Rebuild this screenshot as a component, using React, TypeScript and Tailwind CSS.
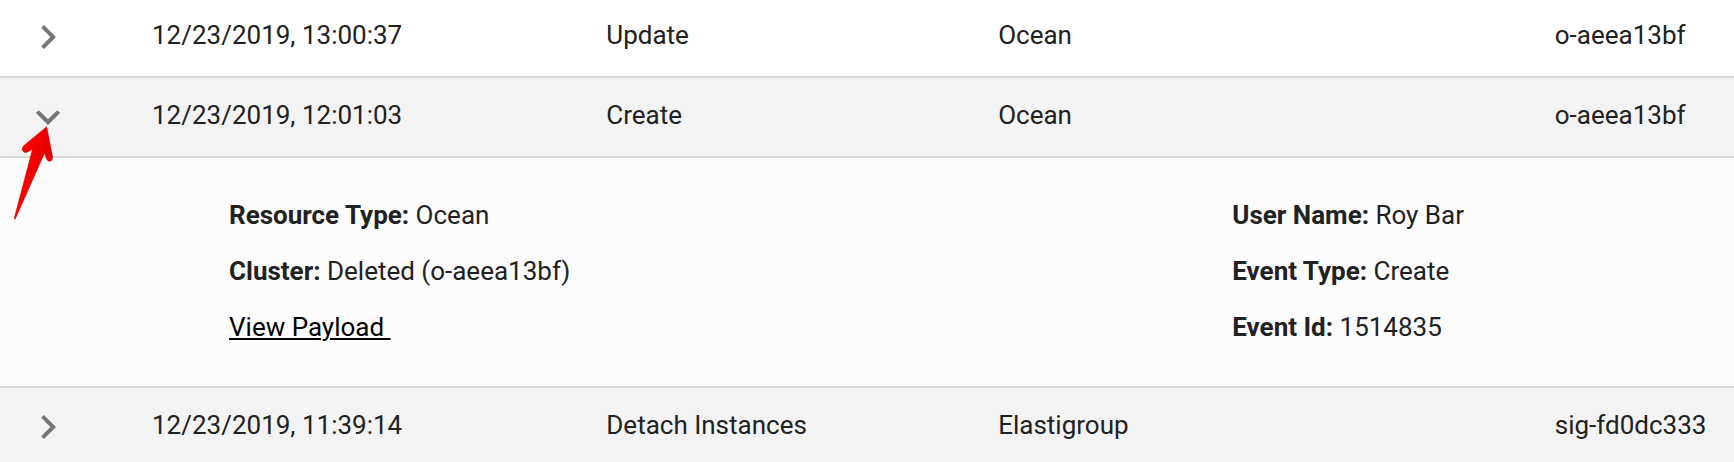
import { Fragment, useState } from "react";

type Detail = { label: string; value: string };

type AuditEvent = {
  id: string;
  time: string;
  action: string;
  product: string;
  resource: string;
  left?: Detail[];
  right?: Detail[];
};

const EVENTS: AuditEvent[] = [
  { id: "1", time: "12/23/2019, 13:00:37", action: "Update", product: "Ocean", resource: "o-aeea13bf" },
  {
    id: "2",
    time: "12/23/2019, 12:01:03",
    action: "Create",
    product: "Ocean",
    resource: "o-aeea13bf",
    left: [
      { label: "Resource Type:", value: "Ocean" },
      { label: "Cluster:", value: "Deleted (o-aeea13bf)" },
    ],
    right: [
      { label: "User Name:", value: "Roy Bar" },
      { label: "Event Type:", value: "Create" },
      { label: "Event Id:", value: "1514835" },
    ],
  },
  {
    id: "3",
    time: "12/23/2019, 11:39:14",
    action: "Detach Instances",
    product: "Elastigroup",
    resource: "sig-fd0dc333",
  },
];

function Chevron({ open }: { open: boolean }) {
  return (
    <svg viewBox="0 0 24 24" className="size-12 fill-[#757575]" aria-hidden="true">
      {open ? (
        <path d="M16.59 8.59L12 13.17 7.41 8.59 6 10l6 6 6-6z" />
      ) : (
        <path d="M10 6L8.59 7.41 13.17 12l-4.58 4.59L10 18l6-6z" />
      )}
    </svg>
  );
}

function Pointer() {
  return (
    <svg
      viewBox="0 0 44 98"
      className="pointer-events-none absolute left-3 top-[46px] z-10 h-[98px] w-11"
      aria-hidden="true"
    >
      <defs>
        <linearGradient id="pointer-fill" x1="0" y1="0" x2="1" y2="0.3">
          <stop offset="0.3" stopColor="#ff0000" />
          <stop offset="1" stopColor="#e00000" />
        </linearGradient>
      </defs>
      <path
        d="M34.8 2.5L11.5 21.8Q9.5 23.8 10.2 26.3Q11.8 29.6 15.2 28.3L20.3 25.4L2.1 94.3Q2.3 96 3.5 94.8L32.5 29.4L34.6 35.2Q36.3 38.4 39.2 37Q41 35.8 40.7 33Z"
        fill="url(#pointer-fill)"
        stroke="#b00000"
        strokeOpacity="0.5"
        strokeWidth="0.5"
        strokeLinejoin="round"
      />
    </svg>
  );
}

function Line({ label, value }: Detail) {
  return (
    <p>
      <strong className="font-bold">{label}</strong> {value}
    </p>
  );
}

export default function App() {
  const [openId, setOpenId] = useState<string | null>("2");

  return (
    <main className="overflow-hidden bg-white font-['Roboto',sans-serif] text-[26px] leading-10 text-[#212121]">
      <table className="w-full table-fixed border-collapse text-left">
        <colgroup>
          <col className="w-[152px]" />
          <col className="w-[26.2%]" />
          <col className="w-[22.6%]" />
          <col className="w-[32.1%]" />
          <col />
        </colgroup>
        <tbody>
          {EVENTS.map((event, index) => {
            const open = event.id === openId;
            const first = index === 0;
            const last = index === EVENTS.length - 1;
            return (
              <Fragment key={event.id}>
                <tr className={first ? "bg-white" : "bg-[#f3f3f3]"}>
                  <td className="p-0 align-top">
                    <div className={first ? "relative pl-6 pt-[13px]" : "relative pl-6 pt-[15px]"}>
                      <button
                        type="button"
                        className="block"
                        aria-expanded={open}
                        aria-label={open ? "Collapse event" : "Expand event"}
                        onClick={() => setOpenId(open ? null : event.id)}
                      >
                        <Chevron open={open} />
                      </button>
                      {open && <Pointer />}
                    </div>
                  </td>
                  {[event.time, event.action, event.product, event.resource].map((text, i) => (
                    <td
                      key={i}
                      className={
                        first
                          ? "whitespace-nowrap p-0 pb-[21px] pt-[15px]"
                          : last
                            ? "whitespace-nowrap p-0 pb-[17px] pt-[17px]"
                            : "whitespace-nowrap p-0 pb-[21px] pt-[17px]"
                      }
                    >
                      {text}
                    </td>
                  ))}
                </tr>
                {!last && (
                  <tr aria-hidden="true">
                    <td colSpan={5} className="h-[2px] bg-[#d8d8d8] p-0" />
                  </tr>
                )}
                {open && event.left && event.right && (
                  <>
                    <tr className="bg-[#fcfcfc]">
                      <td colSpan={5} className="p-0">
                        <div className="grid grid-cols-[2fr_1fr] pb-[39px] pl-[229px] pt-[37px]">
                          <div className="flex flex-col gap-4">
                            {event.left.map((d) => (
                              <Line key={d.label} {...d} />
                            ))}
                            <p>
                              <a
                                href="#payload"
                                className="whitespace-pre text-black underline decoration-2 underline-offset-2"
                              >
                                {"View Payload "}
                              </a>
                            </p>
                          </div>
                          <div className="flex flex-col gap-4">
                            {event.right.map((d) => (
                              <Line key={d.label} {...d} />
                            ))}
                          </div>
                        </div>
                      </td>
                    </tr>
                    <tr aria-hidden="true">
                      <td colSpan={5} className="h-[2px] bg-[#d8d8d8] p-0" />
                    </tr>
                  </>
                )}
              </Fragment>
            );
          })}
        </tbody>
      </table>
    </main>
  );
}
